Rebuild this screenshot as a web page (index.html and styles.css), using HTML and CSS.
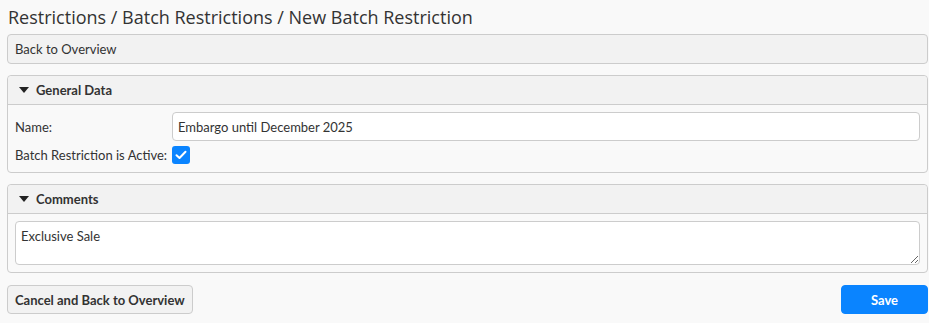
FILE: index.html
```html
<!DOCTYPE html>
<html>
<head>
    <link rel="stylesheet" href="styles.css">
</head>
<body>
    <h1 class="page-title">Restrictions / Batch Restrictions / New Batch Restriction</h1>

    <div class="toolbar">Back to Overview</div>

    <div class="panel">
        <div class="panel-header"><span class="caret"></span>General Data</div>
        <div class="panel-body general-body">
            <div class="form-row">
                <label class="form-label">Name:</label>
                <input class="text-input" type="text" value="Embargo until December 2025">
            </div>
            <div class="form-row">
                <label class="form-label">Batch Restriction is Active:</label>
                <span class="checkbox">
                    <svg width="12" height="10" viewBox="0 0 12 10"><path d="M1.5 5.2 L4.5 8 L10.5 1.8" fill="none" stroke="#fff" stroke-width="2" stroke-linecap="round" stroke-linejoin="round"/></svg>
                </span>
            </div>
        </div>
    </div>

    <div class="panel">
        <div class="panel-header"><span class="caret"></span>Comments</div>
        <div class="panel-body">
            <textarea class="comment-box">Exclusive Sale</textarea>
        </div>
    </div>

    <div class="actions">
        <button class="btn">Cancel and Back to Overview</button>
        <button class="btn btn-primary">Save</button>
    </div>
</body>
</html>
```

FILE: styles.css
```css
body {
    font-family: Lato, sans-serif;
    margin: 0;
    padding: 0 1px 0 7px;
    background-color: #f9f9f9;
    color: #333;
    font-size: 13px;
}
.page-title {
    font-family: "Open Sans", sans-serif;
    font-size: 18px;
    font-weight: normal;
    margin: 0;
    padding: 5px 1px 5px;
    line-height: 24px;
    color: #333;
}
.toolbar {
    background-color: #f2f2f2;
    border: 1px solid #ccc;
    border-radius: 4px;
    padding: 0 7px;
    height: 28px;
    line-height: 28px;
    margin-bottom: 11px;
}
.panel {
    border: 1px solid #ccc;
    border-radius: 4px;
    background-color: #f9f9f9;
    margin-bottom: 11px;
}
.panel-header {
    background-color: #f2f2f2;
    border-bottom: 1px solid #ccc;
    border-radius: 4px 4px 0 0;
    height: 28px;
    line-height: 28px;
    padding: 0 11px;
    font-weight: bold;
}
.caret {
    display: inline-block;
    width: 0;
    height: 0;
    border-left: 5px solid transparent;
    border-right: 5px solid transparent;
    border-top: 6px solid #222;
    margin-right: 7px;
    vertical-align: 2px;
}
.panel-body {
    padding: 7px 7px 7px;
}
.general-body {
    padding-bottom: 8px;
}
.form-row {
    display: flex;
    align-items: center;
    margin-bottom: 5px;
}
.form-row:last-child {
    margin-bottom: 0;
}
.form-label {
    width: 157px;
    flex-shrink: 0;
    white-space: nowrap;
}
.text-input {
    flex: 1;
    height: 29px;
    box-sizing: border-box;
    border: 1px solid #ccc;
    border-radius: 4px;
    background: #fff;
    padding: 0 5px;
    font-family: inherit;
    font-size: 13px;
    color: #333;
}
.checkbox {
    width: 18px;
    height: 18px;
    border-radius: 3px;
    background-color: #0a84ff;
    display: inline-flex;
    align-items: center;
    justify-content: center;
}
.comment-box {
    display: block;
    width: 100%;
    box-sizing: border-box;
    height: 44px;
    border: 1px solid #ccc;
    border-radius: 4px;
    background: #fff;
    padding: 6px 5px;
    font-family: inherit;
    font-size: 13px;
    color: #333;
    resize: vertical;
}
.actions {
    display: flex;
    justify-content: space-between;
    margin-top: 12px;
}
.btn {
    height: 29px;
    padding: 0 7px;
    border: 1px solid #ccc;
    border-radius: 4px;
    background-color: #f2f2f2;
    font-family: inherit;
    font-size: 13px;
    font-weight: bold;
    color: #333;
}
.btn-primary {
    width: 87px;
    background-color: #0a84ff;
    border-color: #0a84ff;
    color: #fff;
}
```
